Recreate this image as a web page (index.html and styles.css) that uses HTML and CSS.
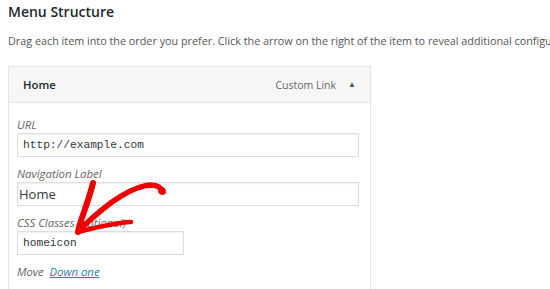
FILE: index.html
```html
<!doctype html>
<html lang="en">
	<head>
		<meta charset="UTF-8">
		<meta name="viewport" content="width=device-width, initial-scale=1.0">
		<title>Menu Structure</title>
		<link rel="stylesheet" href="styles.css">
	</head>
	<body>
		<div class="page">

			<h2 class="title">Menu Structure</h2>
			<p class="desc">Drag each item into the order you prefer. Click the arrow on the right of the item to reveal additional configuration options.</p>

			<div class="menu-item">
				<div class="item-bar">
					<span class="item-title">Home</span>
					<span class="item-controls">
						<span class="item-type">Custom Link</span>
						<span class="item-toggle">&#9650;</span>
					</span>
				</div>

				<div class="item-settings">
					<label class="field-label">URL</label>
					<input class="field code" type="text" value="http://example.com">

					<label class="field-label">Navigation Label</label>
					<input class="field plain" type="text" value="Home">

					<label class="field-label">CSS Classes (optional)</label>
					<input class="field code short" type="text" value="homeicon">

					<div class="move">Move <a href="#">Down one</a></div>
				</div>
			</div>

			<!-- hand drawn arrow over the form -->
			<svg class="marker" width="550" height="289" viewBox="0 0 550 289">
				<path d="M163,192 C161,187 156,185 150,185 C138,186 125,193 112,202 C100,211 88,221 78,232" fill="none" stroke="#ee0000" stroke-width="5.5" stroke-linecap="round"/>
				<path d="M93,183 C91,192 87,203 84,212 C81,220 79,226 78,232" fill="none" stroke="#ee0000" stroke-width="6" stroke-linecap="round"/>
				<path d="M78,232 C90,229 103,226 114,224 C121,223 126,222 131,222" fill="none" stroke="#ee0000" stroke-width="4.5" stroke-linecap="round"/>
				<circle cx="162" cy="191" r="3.8" fill="#ee0000"/>
			</svg>

		</div>
	</body>
</html>
```

FILE: styles.css
```css
*{
	box-sizing:border-box;
}

body
{
	margin:0;
	background-color:#fff;
	font-family:"Open Sans", "Noto Sans", sans-serif;
	color:#444;
	overflow:hidden;
}

.page
{
	position:relative;
	padding:0 8px;
	height:289px;
	overflow:hidden;
}

.title
{
	margin:0;
	padding-top:1px;
	font-size:14px;
	font-weight:600;
	color:#23282d;
	line-height:22px;
}

.desc
{
	margin:9px -8px 0 0;
	font-size:10.8px;
	line-height:18px;
	color:#555;
	white-space:nowrap;
	overflow:hidden;
}

.menu-item
{
	width:363px;
	margin-top:16px;
	height:223px;
	border:1px solid #e5e5e5;
	border-bottom:none;
}

.item-bar
{
	height:36px;
	background-color:#f6f6f6;
	border-bottom:1px solid #e5e5e5;
	display:flex;
	align-items:center;
	justify-content:space-between;
	padding:0 14px 0 14px;
}

.item-title
{
	font-size:11.3px;
	font-weight:600;
	color:#23282d;
}

.item-controls
{
	display:flex;
	align-items:center;
	gap:12px;
}

.item-type
{
	font-size:10.5px;
	color:#666;
}

.item-toggle
{
	font-size:8px;
	color:#555;
	padding-bottom:2px;
}

.item-settings
{
	padding:14px 11px 0 8px;
}

.field-label
{
	display:block;
	font-size:11.4px;
	font-style:italic;
	color:#666;
	line-height:16px;
}

.field
{
	display:block;
	width:342px;
	height:24px;
	margin:0 0 9px 0;
	border:1px solid #ddd;
	box-shadow:inset 0 1px 2px rgba(0,0,0,0.07);
	background-color:#fff;
	color:#32373c;
	padding:0 5px;
	outline:none;
}

.code
{
	font-family:"Liberation Mono", "DejaVu Sans Mono", monospace;
	font-size:11.2px;
}

.plain
{
	font-family:"Open Sans", "Noto Sans", sans-serif;
	font-size:13px;
	padding-left:1px;
}

.short
{
	width:167px;
}

.move
{
	margin-top:6px;
	font-size:11.3px;
	font-style:italic;
	color:#666;
}

.move a
{
	margin-left:3px;
	color:#2a7ea8;
	text-decoration:underline;
}

.marker
{
	position:absolute;
	left:0;
	top:0;
	pointer-events:none;
}
```
